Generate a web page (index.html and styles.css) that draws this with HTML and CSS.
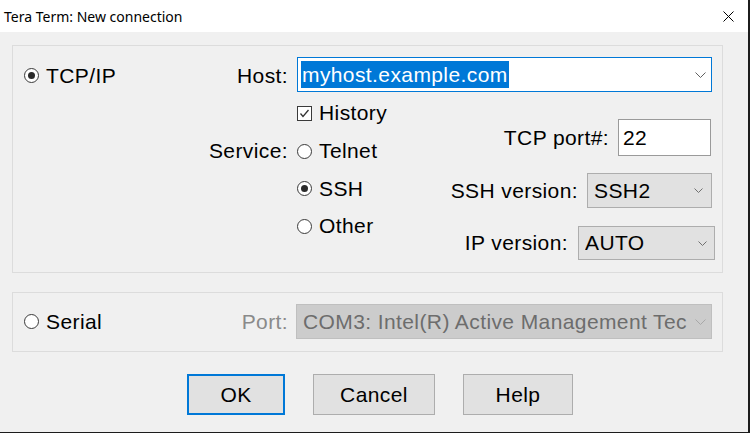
FILE: index.html
```html
<!DOCTYPE html>
<html lang="en">
<head>
<meta charset="utf-8">
<title>Tera Term: New connection</title>
<link rel="stylesheet" href="styles.css">
</head>
<body>
<div class="window">
  <div class="titlebar">
    <span class="title">Tera Term: New connection</span>
    <svg class="close" width="11" height="11" viewBox="0 0 11 11"><path d="M0.5 0.5L10.5 10.5M10.5 0.5L0.5 10.5" stroke="#000" stroke-width="1" fill="none"/></svg>
  </div>
  <div class="content">
    <div class="group tcp">
      <div class="opt col-a row-1"><span class="radio checked"></span><span>TCP/IP</span></div>
      <span class="label col-b row-1">Host:</span>
      <div class="combo host col-cd row-1">
        <span class="value"><span class="sel">myhost.example.com</span></span>
        <svg class="chev" width="11" height="6" viewBox="0 0 11 6"><path d="M0.5 0.5L5.5 5.5L10.5 0.5" stroke="#606060" fill="none"/></svg>
      </div>
      <div class="opt col-c row-2"><span class="checkbox"><svg width="13" height="13" viewBox="0 0 13 13"><path d="M2.5 6.5L5 9.5L10.5 3" stroke="#333" stroke-width="1.3" fill="none"/></svg></span><span>History</span></div>
      <span class="label col-b row-3">Service:</span>
      <div class="opt col-c row-3"><span class="radio"></span><span>Telnet</span></div>
      <div class="opt col-c row-4"><span class="radio checked"></span><span>SSH</span></div>
      <div class="opt col-c row-5"><span class="radio"></span><span>Other</span></div>
      <div class="right-block">
        <div class="field port">
          <span>TCP port#:</span>
          <div class="input">22</div>
        </div>
        <div class="field ssh">
          <span>SSH version:</span>
          <div class="combo">
            <span class="value">SSH2</span>
            <svg class="chev" width="9" height="5" viewBox="0 0 9 5"><path d="M0.5 0.5L4.5 4.5L8.5 0.5" stroke="#707070" fill="none"/></svg>
          </div>
        </div>
        <div class="field ip">
          <span>IP version:</span>
          <div class="combo">
            <span class="value">AUTO</span>
            <svg class="chev" width="9" height="5" viewBox="0 0 9 5"><path d="M0.5 0.5L4.5 4.5L8.5 0.5" stroke="#707070" fill="none"/></svg>
          </div>
        </div>
      </div>
    </div>
    <div class="group serial">
      <div class="opt col-a row-1"><span class="radio"></span><span>Serial</span></div>
      <span class="label disabled col-b row-1">Port:</span>
      <div class="combo disabled col-cd row-1">
        <span class="value">COM3: Intel(R) Active Management Tec</span>
        <svg class="chev" width="11" height="6" viewBox="0 0 11 6"><path d="M0.5 0.5L5.5 5.5L10.5 0.5" stroke="#a8a8a8" fill="none"/></svg>
      </div>
    </div>
    <div class="buttons">
      <div class="btn ok">OK</div>
      <div class="btn cancel">Cancel</div>
      <div class="btn help">Help</div>
    </div>
  </div>
</div>
</body>
</html>
```
FILE: styles.css
```css
* { box-sizing: border-box; }
html, body { margin: 0; padding: 0; }
body {
  width: 750px;
  height: 433px;
  overflow: hidden;
  background: #f0f0f0;
  font-family: "Liberation Sans", Arial, sans-serif;
  font-size: 21px;
  letter-spacing: 0.4px;
  color: #000;
}
.window {
  width: 750px;
  height: 433px;
  display: flex;
  flex-direction: column;
  background: #f0f0f0;
  border-right: 2px solid #1c1c1c;
  border-bottom: 1px solid #1c1c1c;
}
.titlebar {
  height: 32px;
  flex: none;
  background: #fff;
  display: flex;
  align-items: center;
  padding-left: 4px;
}
.title {
  flex: 1;
  font-family: "Noto Sans", sans-serif;
  font-size: 14px;
  letter-spacing: 0;
  color: #000;
}
.close { margin-right: 14px; }
.content {
  padding: 13px 0 0 12px;
}
.group {
  width: 711px;
  border: 1px solid #dcdcdc;
  display: grid;
  grid-template-columns: 176px 97px 143px 275px;
  padding: 11px 7px 12px 11px;
}
.tcp { grid-template-rows: 37px 38px 38px 37px 38px 15px; }
.serial { grid-template-rows: 35px; margin-top: 19px; }
.col-a { grid-column: 1; }
.col-b { grid-column: 2; }
.col-c { grid-column: 3; }
.col-cd { grid-column: 3 / 5; }
.row-1 { grid-row: 1; }
.row-2 { grid-row: 2; }
.row-3 { grid-row: 3; }
.row-4 { grid-row: 4; }
.row-5 { grid-row: 5; }
.label {
  justify-self: end;
  align-self: center;
  padding-right: 9px;
  white-space: nowrap;
}
.label.disabled { color: #8a8a8a; }
.opt {
  display: flex;
  align-items: center;
  gap: 7px;
  white-space: nowrap;
  align-self: center;
}
.radio {
  width: 15px;
  height: 15px;
  border: 1px solid #3a3a3a;
  border-radius: 50%;
  background: #fff;
  display: flex;
  align-items: center;
  justify-content: center;
  flex: none;
}
.radio.checked::after {
  content: "";
  width: 7px;
  height: 7px;
  border-radius: 50%;
  background: #2a2a2a;
}
.checkbox {
  width: 15px;
  height: 15px;
  border: 1px solid #3a3a3a;
  background: #fff;
  display: flex;
  align-items: center;
  justify-content: center;
  flex: none;
}
.combo {
  display: flex;
  align-items: center;
  border: 1px solid #adadad;
  background: #e1e1e1;
  padding: 0 8px 0 6px;
  white-space: nowrap;
}
.combo .value { flex: 1; overflow: hidden; }
.combo.host {
  width: 415px;
  height: 35px;
  align-self: start;
  background: #fff;
  border-color: #0078d7;
  padding: 3px 5px 3px 3px;
}
.sel {
  display: inline-block;
  background: #0078d7;
  color: #fff;
  line-height: 27px;
  padding: 0 1px;
}
.combo.disabled {
  width: 416px;
  height: 35px;
  margin-left: -1px;
  background: #cccccc;
  border-color: #bfbfbf;
  color: #6d6d6d;
  padding: 0 5px 0 6px;
}
.combo.disabled .value { margin-right: 6px; }
.right-block {
  grid-column: 4;
  grid-row: 2 / 7;
  display: flex;
  flex-direction: column;
  align-items: flex-end;
  padding-top: 25px;
}
.field {
  display: flex;
  align-items: center;
  gap: 9px;
  white-space: nowrap;
}
.field.port { margin-right: 4px; }
.field.ssh { margin-top: 17px; margin-right: 3px; }
.field.ip { margin-top: 18px; gap: 10px; }
.input {
  width: 93px;
  height: 37px;
  background: #fff;
  border: 1px solid #9a9a9a;
  padding-left: 4px;
  display: flex;
  align-items: center;
}
.field.ssh .combo { width: 125px; height: 35px; }
.field.ip .combo { width: 137px; height: 34px; padding-right: 7px; }
.buttons {
  display: flex;
  gap: 28px;
  margin-top: 22px;
  margin-left: 175px;
}
.btn {
  height: 41px;
  background: #e1e1e1;
  border: 1px solid #adadad;
  display: flex;
  align-items: center;
  justify-content: center;
}
.btn.ok { width: 98px; border: 2px solid #0078d7; }
.btn.cancel { width: 122px; }
.btn.help { width: 110px; }
```
